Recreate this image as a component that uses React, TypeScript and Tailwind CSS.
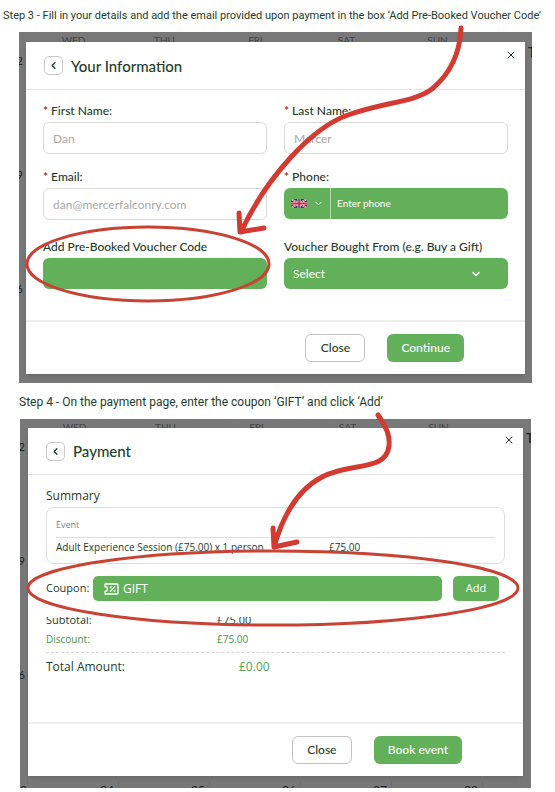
import React from 'react'
import { ChevronDown, ChevronLeft, X } from 'lucide-react'

const WEEKDAYS = ['WED', 'THU', 'FRI', 'SAT', 'SUN']

const inputClass =
  'block w-full h-8 rounded-md border border-[#d9d9d9] bg-white px-[9px] text-[12px] text-[#1f3d2b] placeholder:text-[#a9a9a9] outline-none'

interface FieldProps {
  id: string;
  label: string;
  required?: boolean;
  children: React.ReactNode;
}

function Field({ id, label, required, children }: FieldProps) {
  return (
    <div>
      <label htmlFor={id} className="block h-[22px] text-[12px] leading-[22px] font-medium whitespace-nowrap">
        {required && <span className="mr-[3px] font-bold text-[#a8321f]">*</span>}
        {label}
      </label>
      {children}
    </div>
  )
}

interface CalendarFrameProps {
  days: string[];
  dates?: string[];
  edge: string;
  top: string;
  bottom: string;
  children: React.ReactNode;
}

// Dimmed calendar page that shows around the edges of the modal
function CalendarFrame({ days, dates, edge, top, bottom, children }: CalendarFrameProps) {
  return (
    <div className="bg-[#787878] text-[#444]">
      <div className={`flex overflow-hidden pl-[9px] ${top}`}>
        {WEEKDAYS.map((day) => (
          <span key={day} className="w-[91px] shrink-0 pt-[3px] text-center text-[10px] leading-[11px]">{day}</span>
        ))}
      </div>
      <div className="flex">
        <div className={`flex shrink-0 flex-col items-end gap-[102px] overflow-hidden pt-[13px] pr-[3px] text-[11px] leading-3 text-[#222] ${edge}`}>
          {days.map((day) => <span key={day}>{day}</span>)}
        </div>
        <div className="min-w-0 flex-1 bg-white text-[#1f3d2b] shadow-md">{children}</div>
        <div className={`shrink-0 overflow-hidden pt-[2px] pl-[3px] text-[13px] leading-4 font-semibold text-[#222] ${edge}`}>T</div>
      </div>
      <div className={`flex overflow-hidden ${bottom}`}>
        {dates?.map((date) => (
          <span key={date} className="w-[91px] shrink-0 border-r border-[#707070] pt-[7px] pr-1 text-right text-[12px] leading-[14px] text-[#222] first:w-2 first:pr-[3px]">
            {date}
          </span>
        ))}
      </div>
    </div>
  )
}

function ModalHeader({ title, height }: { title: string; height: string }) {
  return (
    <header className={`flex items-center border-b border-[#e4e4e4] pl-[18px] pr-2 ${height}`}>
      <button aria-label="Back" className="flex size-[19px] items-center justify-center rounded-[5px] border border-[#c9c9c9]">
        <ChevronLeft size={11} strokeWidth={3} />
      </button>
      <h2 className="ml-2 text-[15px] leading-5 font-medium">{title}</h2>
      <button aria-label="Dismiss" className="ml-auto mb-[22px]">
        <X size={12} strokeWidth={2} />
      </button>
    </header>
  )
}

function ModalFooter({ action }: { action: string }) {
  return (
    <footer className="flex justify-end gap-[22px] border-t-2 border-[#efefef] py-3 pr-[61px]">
      <button className="h-7 w-[60px] rounded-md border border-[#c4c4c4] text-[12px] font-medium">Close</button>
      <button className="h-7 rounded-md bg-[#62b15a] px-[14px] text-[12px] font-medium text-white">{action}</button>
    </footer>
  )
}

function UkFlag() {
  return (
    <svg width="16" height="9" viewBox="0 0 16 9" aria-hidden="true">
      <rect width="16" height="9" fill="#2d3b78" />
      <path d="M0 0L16 9M16 0L0 9" stroke="#fff" strokeWidth="1.6" />
      <path d="M0 0L16 9M16 0L0 9" stroke="#c8314a" strokeWidth="0.8" />
      <path d="M8 0V9M0 4.5H16" stroke="#f0dde4" strokeWidth="3" />
      <path d="M8 0V9M0 4.5H16" stroke="#c8314a" strokeWidth="1.8" />
    </svg>
  )
}

function CouponIcon() {
  return (
    <svg width="15" height="12" viewBox="0 0 15 12" fill="none" stroke="#fff" strokeWidth="1.3" aria-hidden="true">
      <path d="M1 1H13Q14 1 14 2V10Q14 11 13 11H1V8.5Q3.5 8 3.5 6T1 3.5Z" strokeLinejoin="round" />
      <path d="M6.3 8.4L10.8 3.6" strokeLinecap="round" />
      <circle cx="6.8" cy="4.2" r="0.4" />
      <circle cx="10.4" cy="7.8" r="0.4" />
    </svg>
  )
}

function InformationModal() {
  return (
    <>
      <ModalHeader title="Your Information" height="h-12" />
      <form className="grid grid-cols-2 gap-x-[17px] gap-y-3 px-[17px] pt-[10px] pb-[31px]">
        <Field id="first" label="First Name:" required>
          <input id="first" placeholder="Dan" className={inputClass} />
        </Field>
        <Field id="last" label="Last Name:" required>
          <input id="last" placeholder="Mercer" className={inputClass} />
        </Field>
        <Field id="email" label="Email:" required>
          <input id="email" type="email" placeholder="dan@mercerfalconry.com" className={inputClass} />
        </Field>
        <Field id="phone" label="Phone:" required>
          <div className="flex h-[31px] rounded-md bg-[#62b15a] text-white">
            <button type="button" aria-label="Country" className="flex w-[47px] items-center justify-between border-r border-[#b9dcb5] pl-[7px] pr-1.5">
              <UkFlag />
              <ChevronDown size={11} />
            </button>
            <input id="phone" type="tel" placeholder="Enter phone" className="min-w-0 flex-1 px-1.5 text-[10px] placeholder:text-white outline-none" />
          </div>
        </Field>
        <div className="pt-1">
          <Field id="voucher" label="Add Pre-Booked Voucher Code">
            <input id="voucher" className="block h-[31px] w-full rounded-md bg-[#62b15a] px-[9px] text-[12px] text-white outline-none" />
          </Field>
        </div>
        <div className="pt-1">
          <Field id="seller" label="Voucher Bought From (e.g. Buy a Gift)">
            <div className="relative">
              <select id="seller" className="block h-[31px] w-full appearance-none rounded-md bg-[#62b15a] px-[9px] text-[12px] text-white outline-none">
                <option>Select</option>
              </select>
              <ChevronDown size={12} strokeWidth={3} className="pointer-events-none absolute right-[26px] top-[10px] text-white" />
            </div>
          </Field>
        </div>
      </form>
      <ModalFooter action="Continue" />
    </>
  )
}

function PaymentModal() {
  return (
    <>
      <ModalHeader title="Payment" height="h-[47px]" />
      <div className="h-[247px] px-[18px] pt-[10px] font-['Open_Sans',sans-serif]">
        <h3 className="h-[22px] text-[12px] leading-[22px]">Summary</h3>
        <table className="block rounded-lg border border-[#dedede] px-[9px] pt-2 pb-[7px] text-left">
          <thead className="block">
            <tr className="flex border-b border-[#dedede] pb-[3px]">
              <th className="text-[9px] leading-[18px] font-normal text-[#888]">Event</th>
            </tr>
          </thead>
          <tbody className="block">
            <tr className="flex h-[18px] text-[10px] leading-[19px]">
              <td className="w-[273px]">Adult Experience Session (£75.00) x 1 person</td>
              <td>£75.00</td>
            </tr>
          </tbody>
        </table>
        <div className="mt-3 flex h-[25px] items-center pr-1.5">
          <label htmlFor="coupon" className="w-[47px] shrink-0 text-[11px]">Coupon:</label>
          <div className="flex h-full flex-1 items-center gap-[4px] rounded-[5px] bg-[#62b15a] pl-[11px] text-white">
            <CouponIcon />
            <input id="coupon" defaultValue="GIFT" className="min-w-0 flex-1 text-[12px] outline-none" />
          </div>
          <button className="ml-[11px] h-full w-[46px] rounded-[5px] bg-[#62b15a] text-[11px] font-medium text-white">Add</button>
        </div>
        <dl className="mt-4">
          <div className="flex h-[9px] items-end overflow-hidden text-[11px] leading-3">
            <dt className="w-[171px]">Subtotal:</dt>
            <dd>£75.00</dd>
          </div>
          <div className="flex pt-1 pb-1 text-[10px] leading-[18px] text-[#4c9446]">
            <dt className="w-[171px]">Discount:</dt>
            <dd>£75.00</dd>
          </div>
          <div className="flex border-t border-dashed border-[#d6d6d6] pt-1 text-[12px] leading-5">
            <dt className="w-[193px]">Total Amount:</dt>
            <dd className="text-[#56a24f]">£0.00</dd>
          </div>
        </dl>
      </div>
      <ModalFooter action="Book event" />
    </>
  )
}

export default function App() {
  return (
    <main className="bg-white font-['Lato',sans-serif] text-[#1f3d2b]">
      <section className="relative pr-[23px] pl-[19px]">
        <h1 className="-ml-4 h-8 pt-[7px] font-['Roboto',sans-serif] text-[11px] leading-[18px] whitespace-nowrap">
          Step 3 - Fill in your details and add the email provided upon payment in the box ‘Add Pre-Booked Voucher Code’
        </h1>
        <CalendarFrame days={['2', '9', '6']} edge="w-[7px]" top="h-[10px]" bottom="h-[9px]">
          <InformationModal />
        </CalendarFrame>
        <svg className="pointer-events-none absolute top-0 left-0" width="555" height="383" fill="none" stroke="#d33b32" aria-hidden="true">
          <ellipse cx="148" cy="264" rx="121" ry="37" stroke="#c94335" strokeWidth="3" />
          <path
            d="M461 28C460 53 450 74 432 89C413 103 383 102 348 115C313 127 267 176 241 232M239 213L240 232L264 228"
            strokeWidth="5"
            strokeLinecap="round"
            strokeLinejoin="round"
          />
        </svg>
      </section>
      <section className="relative pr-[24px] pl-[20px]">
        <h1 className="-ml-px h-9 pt-[10px] font-['Roboto',sans-serif] text-[12px] leading-[18px] whitespace-nowrap">
          Step 4 - On the payment page, enter the coupon ‘GIFT’ and click ‘Add’
        </h1>
        <CalendarFrame days={['2', '9', '6']} dates={['3', '24', '25', '26', '27', '28']} edge="w-2" top="h-[9px]" bottom="h-3">
          <PaymentModal />
        </CalendarFrame>
        <svg className="pointer-events-none absolute top-0 left-0" width="555" height="405" viewBox="0 383 555 405" fill="none" stroke="#d33b32" aria-hidden="true">
          <ellipse cx="273" cy="588" rx="245" ry="37" stroke="#c94335" strokeWidth="3" />
          <path
            d="M378 415C387 428 390 436 389 446C386 472 350 462 322 477C297 490 283 515 274 547M273 528L274 547L297 542"
            strokeWidth="5"
            strokeLinecap="round"
            strokeLinejoin="round"
          />
        </svg>
      </section>
    </main>
  )
}
